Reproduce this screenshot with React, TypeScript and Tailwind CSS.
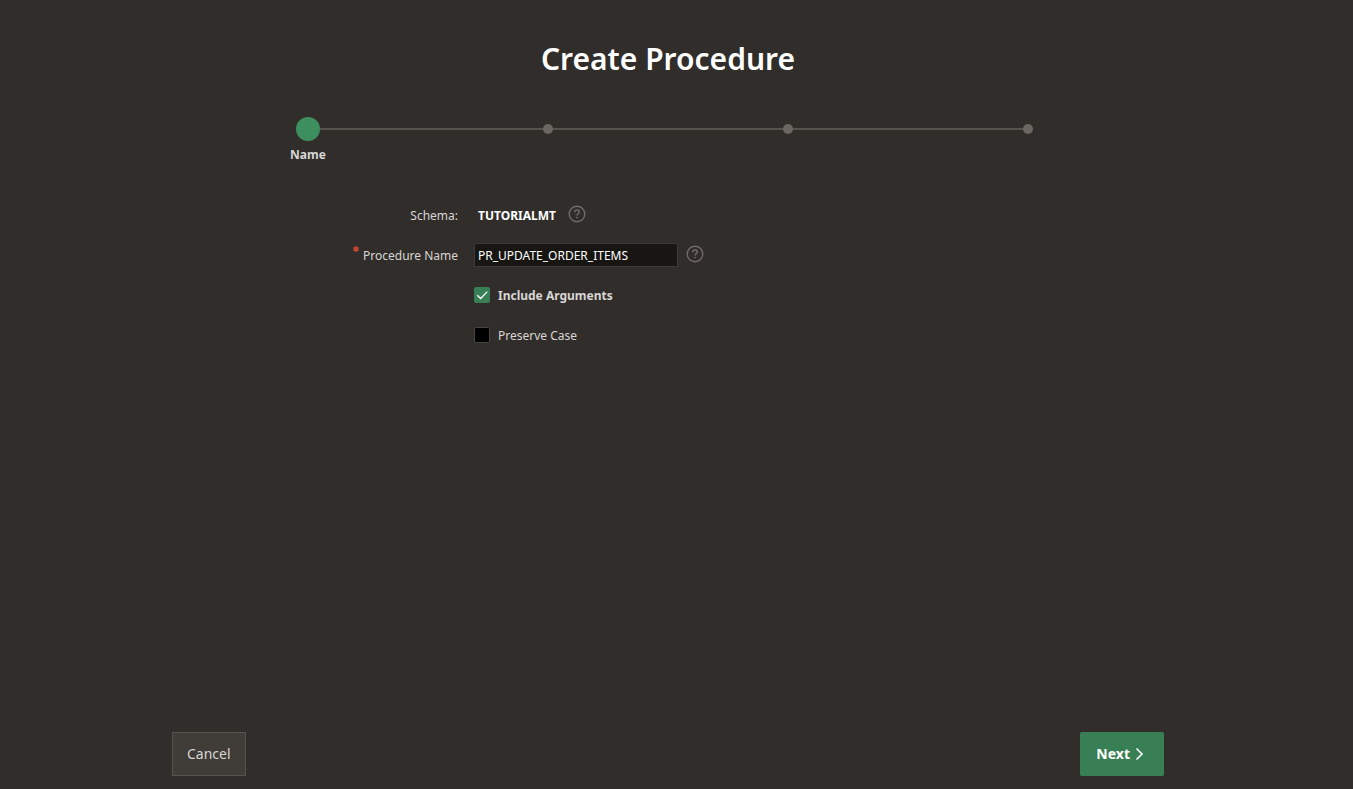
import { useState } from "react";
import type { ReactNode } from "react";

const steps = ["Name", "Arguments", "Definition", "Summary"];

function HelpButton({ label }: { label: string }) {
  return (
    <button type="button" aria-label={label} className="ml-2 shrink-0 pb-0.5 text-[#706b67]">
      <svg width="18" height="18" viewBox="0 0 18 18" fill="none" stroke="currentColor" className="block">
        <circle cx="9" cy="9" r="7.8" strokeWidth="1.4" />
        <path d="M6.7 7.2c0-1.4 1-2.2 2.3-2.2s2.3.8 2.3 2c0 1.600-2.300 1.700-2.300 3.500" strokeWidth="1.5" />
        <circle cx="9" cy="12.600" r=".9" fill="currentColor" stroke="none" />
      </svg>
    </button>
  );
}

function Stepper({ current }: { current: number }) {
  return (
    <ol className="grid grid-cols-4 px-4">
      {steps.map((step, i) => (
        <li key={step} className="flex flex-col items-center">
          <div className="flex h-6 w-full items-center">
            <span className={i === 0 ? "h-0.5 flex-1" : "h-0.5 flex-1 bg-[#55514c]"} />
            <span className={i === current ? "size-6 rounded-full bg-[#3d8f60]" : "size-2.5 rounded-full bg-[#6b6661]"} />
            <span className={i === steps.length - 1 ? "h-0.5 flex-1" : "h-0.5 flex-1 bg-[#55514c]"} />
          </div>
          {i === current && <span className="mt-1 text-xs leading-5 font-bold text-[#d8d6d4]">{step}</span>}
        </li>
      ))}
    </ol>
  );
}

function Row({ label, children }: { label?: ReactNode; children: ReactNode }) {
  return (
    <div className="grid h-10 grid-cols-[286px_1fr] items-center">
      <div className="pt-0.5 pr-4 text-right">{label}</div>
      <div className="flex items-center">{children}</div>
    </div>
  );
}

function Check({ label, checked, onChange }: { label: string; checked: boolean; onChange: (v: boolean) => void }) {
  return (
    <label className="flex items-center gap-2">
      <span className="grid size-4 place-items-center">
        <input
          type="checkbox"
          checked={checked}
          onChange={(e) => onChange(e.target.checked)}
          className="col-start-1 row-start-1 size-4 appearance-none rounded-xs border border-[#47433f] bg-black checked:border-[#387f55] checked:bg-[#387f55]"
        />
        {checked && (
          <svg width="16" height="16" viewBox="0 0 16 16" fill="none" stroke="white" strokeWidth="1.3" className="pointer-events-none col-start-1 row-start-1">
            <path d="M3.300 8.200 6.600 11.500 13.300 4.600" />
          </svg>
        )}
      </span>
      <span className={checked ? "pt-0.5 font-bold" : "pt-0.5"}>{label}</span>
    </label>
  );
}

export default function App() {
  const [name, setName] = useState("PR_UPDATE_ORDER_ITEMS");
  const [args, setArgs] = useState(true);
  const [preserve, setPreserve] = useState(false);

  return (
    <div className="min-h-screen bg-[#312d2a] pr-[17px] font-['Noto_Sans',sans-serif] text-xs leading-5 text-[#d8d6d4]">
      <form className="mx-auto flex min-h-screen max-w-[992px] flex-col pb-[13px]" onSubmit={(e) => e.preventDefault()}>
        <h1 className="pt-9 pb-9 text-center text-3xl leading-[45px] font-semibold text-white">Create Procedure</h1>
        <Stepper current={0} />
        <div className="mt-[30px] px-4">
          <Row label="Schema:">
            <strong className="px-1 pt-0.5 text-white">TUTORIALMT</strong>
            <HelpButton label="Help: Schema" />
          </Row>
          <Row
            label={
              <label htmlFor="procedure-name" className="flex items-start justify-end gap-1">
                <svg aria-label="Required" width="6" height="6" viewBox="0 0 6 6" stroke="#c74634" strokeWidth="1.600">
                  <path d="M3 0v6M.4 1.500 5.600 4.500M.4 4.500 5.600 1.500" />
                </svg>
                Procedure Name
              </label>
            }
          >
            <input
              id="procedure-name"
              value={name}
              onChange={(e) => setName(e.target.value)}
              className="h-6 w-[204px] border border-[#3d3936] bg-[#181613] px-[3px] text-white outline-none"
            />
            <HelpButton label="Help: Procedure Name" />
          </Row>
          <Row>
            <Check label="Include Arguments" checked={args} onChange={setArgs} />
          </Row>
          <Row>
            <Check label="Preserve Case" checked={preserve} onChange={setPreserve} />
          </Row>
        </div>
        <div className="mt-auto flex justify-between text-sm">
          <button type="button" className="h-11 border border-[#56524d] bg-[#403c38] px-3.5">
            Cancel
          </button>
          <button type="submit" className="flex h-11 items-center gap-0.5 rounded-xs bg-[#387f55] px-4 font-bold text-white">
            Next
            <svg width="16" height="16" viewBox="0 0 16 16" fill="none" stroke="currentColor" strokeWidth="1.600">
              <path d="M4.500 2.500 10 8 4.500 13.500" />
            </svg>
          </button>
        </div>
      </form>
    </div>
  );
}
